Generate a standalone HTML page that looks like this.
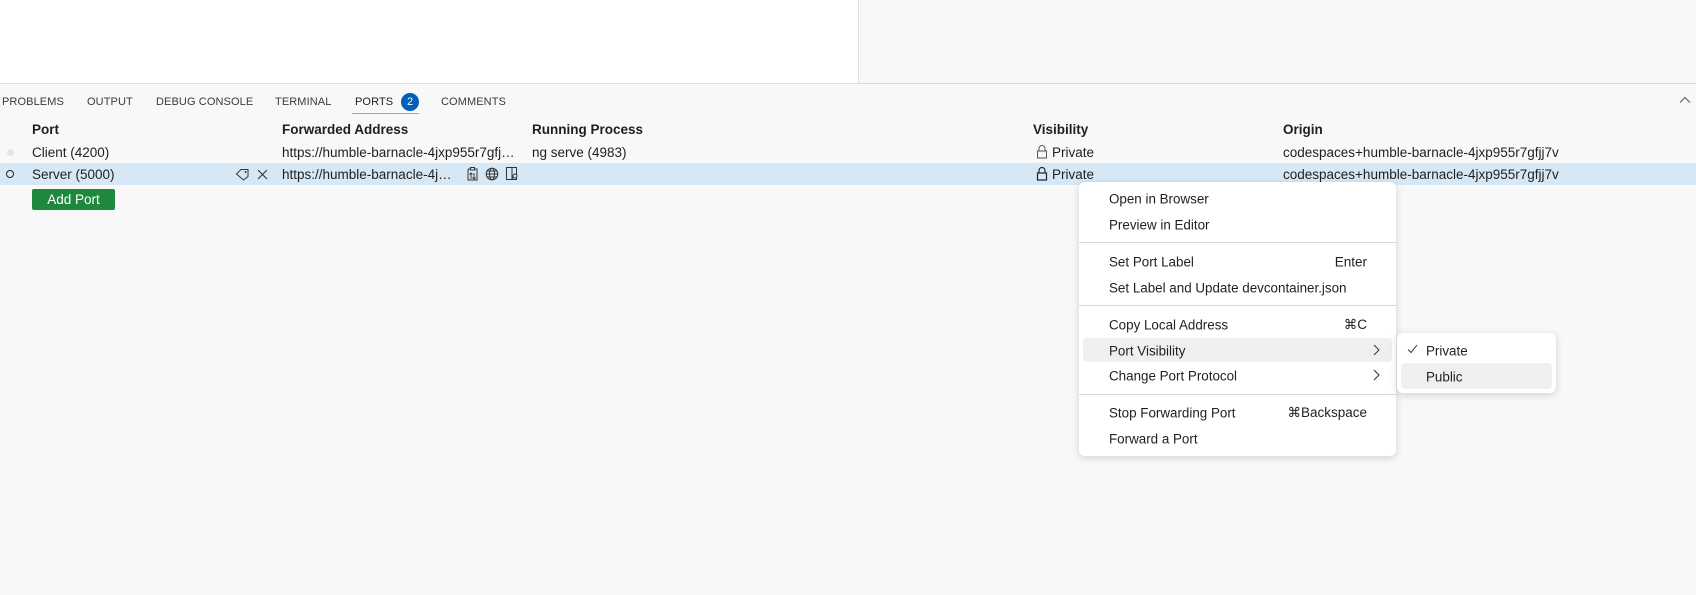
<!DOCTYPE html>
<html><head><meta charset="utf-8"><style>
*{margin:0;padding:0;box-sizing:border-box}
body{width:1696px;height:595px;overflow:hidden;background:#f8f8f8;font-family:"Liberation Sans",sans-serif;font-size:13.5px;color:#1f1f1f;position:relative}
.a{position:absolute;white-space:nowrap}
.tab{position:absolute;top:96px;font-size:11px;color:#3b3b3b;letter-spacing:.1px}
.h{font-weight:bold;top:122px}
.mi{position:absolute;left:1109px;font-size:13.4px;color:#1f1f1f;transform:translateY(-50%)}
.sc{position:absolute;right:calc(1696px - 1367px);transform:translateY(-50%)}
.sep{position:absolute;left:1079px;width:317px;height:1px;background:#d8d8d8}
</style></head><body>
<div class="a" style="left:0;top:0;width:858px;height:83px;background:#fff"></div>
<div class="a" style="left:858px;top:0;width:1px;height:83px;background:#e0e0e0"></div>
<div class="a" style="left:0;top:83px;width:1696px;height:1px;background:#dcdcdc"></div>

<div class="tab" style="left:2px">PROBLEMS</div>
<div class="tab" style="left:87px">OUTPUT</div>
<div class="tab" style="left:156px">DEBUG CONSOLE</div>
<div class="tab" style="left:275px">TERMINAL</div>
<div class="tab" style="left:355px;color:#1f1f1f">PORTS</div>
<div class="a" style="left:401px;top:93px;width:18px;height:18px;border-radius:9px;background:#005fb8;color:#fff;font-size:11px;text-align:center;line-height:18px">2</div>
<div class="tab" style="left:441px">COMMENTS</div>
<div class="a" style="left:352px;top:113px;width:67px;height:1px;background:#f9826c"></div>
<svg class="a" style="left:1679px;top:96px" width="12" height="8" viewBox="0 0 12 8"><path d="M1 6.5L6 1.5L11 6.5" fill="none" stroke="#555" stroke-width="1"/></svg>

<div class="a h" style="left:32px">Port</div>
<div class="a h" style="left:282px">Forwarded Address</div>
<div class="a h" style="left:532px">Running Process</div>
<div class="a h" style="left:1033px">Visibility</div>
<div class="a h" style="left:1283px">Origin</div>

<div class="a" style="left:7px;top:149px;width:7px;height:7px;border-radius:4px;background:#e4e4e4"></div>
<div class="a" style="left:32px;top:145px">Client (4200)</div>
<div class="a" style="left:282px;top:145px">https://humble-barnacle-4jxp955r7gfj…</div>
<div class="a" style="left:532px;top:145px">ng serve (4983)</div>
<svg class="a" style="left:1036px;top:144px" width="12" height="15" viewBox="0 0 12 15"><path d="M3 7V4.5a3 3 0 0 1 6 0V7" fill="none" stroke="#555" stroke-width="1"/><rect x="1.5" y="7" width="9" height="7" fill="none" stroke="#555" stroke-width="1"/></svg>
<div class="a" style="left:1052px;top:145px">Private</div>
<div class="a" style="left:1283px;top:145px">codespaces+humble-barnacle-4jxp955r7gfjj7v</div>

<div class="a" style="left:0;top:163px;width:1696px;height:22px;background:#d6e8f6"></div>
<div class="a" style="left:6px;top:170px;width:8px;height:8px;border-radius:4px;border:1.5px solid #222"></div>
<div class="a" style="left:32px;top:167px">Server (5000)</div>
<svg class="a" style="left:235px;top:167px" width="15" height="14" viewBox="0 0 15 14"><path d="M1.5 7L6 2.5H13V9.5L8.5 13Z" fill="none" stroke="#333" stroke-width="1"/><circle cx="10.5" cy="5" r="1" fill="#333"/></svg>
<svg class="a" style="left:257px;top:169px" width="11" height="11" viewBox="0 0 11 11"><path d="M1 1L10 10M10 1L1 10" stroke="#333" stroke-width="1.1"/></svg>
<div class="a" style="left:282px;top:167px">https://humble-barnacle-4j…</div>
<svg class="a" style="left:466px;top:166px" width="13" height="15" viewBox="0 0 13 15"><path d="M2 3h2M9 3h2V14H2V3" fill="none" stroke="#333"/><rect x="4.5" y="1.5" width="4" height="2.5" fill="none" stroke="#333"/><path d="M5 13V7M3.5 8.5L5 7l1.5 1.5M8 7v6M6.5 11.5L8 13l1.5-1.5" fill="none" stroke="#333" stroke-width=".9"/></svg>
<svg class="a" style="left:485px;top:167px" width="14" height="14" viewBox="0 0 14 14"><circle cx="7" cy="7" r="5.8" fill="none" stroke="#333"/><ellipse cx="7" cy="7" rx="2.5" ry="5.8" fill="none" stroke="#333"/><path d="M1.2 7h11.6M2 4h10M2 10h10" stroke="#333" stroke-width=".9"/></svg>
<svg class="a" style="left:505px;top:166px" width="14" height="15" viewBox="0 0 14 15"><rect x="1.5" y="1.5" width="10" height="12" fill="none" stroke="#333"/><path d="M7 1.5V13.5" stroke="#333"/><circle cx="10" cy="10" r="2" fill="#d6e8f6" stroke="#333"/><path d="M8.6 11.4L7.5 12.5" stroke="#333"/></svg>
<svg class="a" style="left:1036px;top:166px" width="12" height="15" viewBox="0 0 12 15"><path d="M3 7V4.5a3 3 0 0 1 6 0V7" fill="none" stroke="#222" stroke-width="1.2"/><rect x="1.5" y="7" width="9" height="7" fill="none" stroke="#222" stroke-width="1.2"/></svg>
<div class="a" style="left:1052px;top:167px">Private</div>
<div class="a" style="left:1283px;top:167px">codespaces+humble-barnacle-4jxp955r7gfjj7v</div>

<div class="a" style="left:32px;top:189px;width:83px;height:21px;background:#1f883d;border-radius:2px;color:#fff;text-align:center;line-height:21px">Add Port</div>

<div class="a" style="left:1079px;top:182px;width:317px;height:274px;background:#fff;border-radius:6px;box-shadow:0 2px 8px rgba(0,0,0,.16)"></div>
<div class="a" style="left:1083px;top:338px;width:309px;height:24px;background:#efeff1;border-radius:4px"></div>
<div class="mi" style="top:199px">Open in Browser</div>
<div class="mi" style="top:225px">Preview in Editor</div>
<div class="sep" style="top:242px"></div>
<div class="mi" style="top:262px">Set Port Label</div><div class="sc" style="top:262px">Enter</div>
<div class="mi" style="top:288px">Set Label and Update devcontainer.json</div>
<div class="sep" style="top:305px"></div>
<div class="mi" style="top:325px">Copy Local Address</div><div class="sc" style="top:325px">⌘C</div>
<div class="mi" style="top:351px">Port Visibility</div>
<div class="mi" style="top:376px">Change Port Protocol</div>
<svg class="a" style="left:1373px;top:344px" width="7" height="12" viewBox="0 0 7 12"><path d="M1 1l5 5-5 5" fill="none" stroke="#333"/></svg>
<svg class="a" style="left:1373px;top:369px" width="7" height="12" viewBox="0 0 7 12"><path d="M1 1l5 5-5 5" fill="none" stroke="#333"/></svg>
<div class="sep" style="top:394px"></div>
<div class="mi" style="top:413px">Stop Forwarding Port</div><div class="sc" style="top:413px">⌘Backspace</div>
<div class="mi" style="top:439px">Forward a Port</div>

<div class="a" style="left:1397px;top:333px;width:159px;height:60px;background:#fff;border-radius:6px;box-shadow:0 2px 8px rgba(0,0,0,.16)"></div>
<div class="a" style="left:1401px;top:363px;width:151px;height:26px;background:#efeff1;border-radius:4px"></div>
<svg class="a" style="left:1407px;top:344px" width="11" height="10" viewBox="0 0 11 10"><path d="M1 5.5l3 3 6-7.5" fill="none" stroke="#333"/></svg>
<div class="mi" style="left:1426px;top:351px">Private</div>
<div class="mi" style="left:1426px;top:377px">Public</div>
</body></html>
